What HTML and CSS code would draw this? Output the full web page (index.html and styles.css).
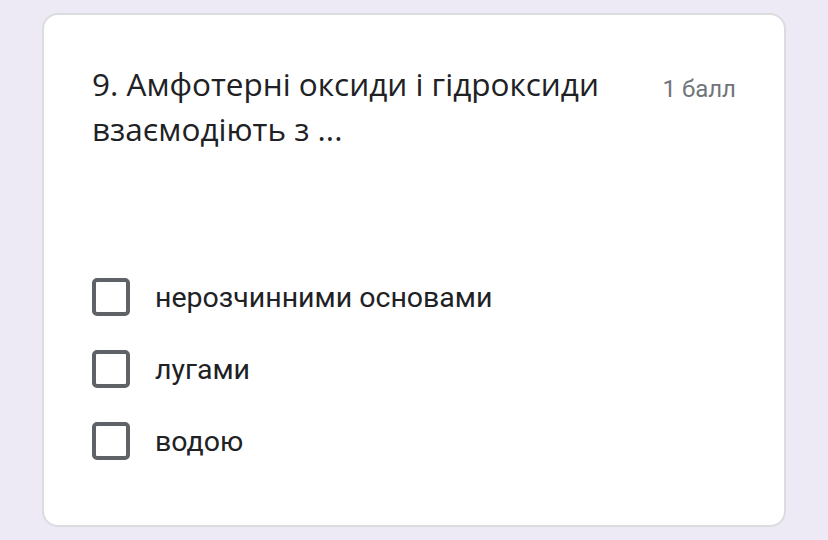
FILE: index.html
```html
<!DOCTYPE html>
<html lang="uk">
<head>
    <meta charset="UTF-8">
    <title>Питання 9</title>
    <link rel="stylesheet" href="styles.css">
</head>
<body>
<div class="card">
    <div class="head">
        <div class="title">9. Амфотерні оксиди і гідроксиди взаємодіють з ...</div>
        <div class="points">1 балл</div>
    </div>
    <ul class="options">
        <li><span class="box"></span>нерозчинними основами</li>
        <li><span class="box"></span>лугами</li>
        <li><span class="box"></span>водою</li>
    </ul>
</div>
</body>
</html>
```

FILE: styles.css
```css
body,div,ul,li{margin:0;padding:0;}
body{background:#edeaf6;font-family:"Open Sans","Noto Sans",sans-serif;color:#202124;}
ul{list-style-type:none;}
.card{margin:13px 42px 0 42px;height:514px;box-sizing:border-box;background:#fff;border:2px solid #dadce0;border-radius:16px;padding:46px 48px 0 48px;}
.head{display:flex;justify-content:space-between;align-items:flex-start;}
.title{width:540px;font-size:31.5px;line-height:45px;color:#202124;}
.points{font-family:Roboto,sans-serif;font-size:24px;color:#70757a;margin-top:14px;}
.options{margin-top:110px;}
.options li{display:flex;align-items:center;height:72px;font-family:Roboto,sans-serif;font-size:28.5px;color:#202124;}
.box{width:38px;height:38px;box-sizing:border-box;border:4px solid #5f6368;border-radius:5px;margin-right:25px;}
```
